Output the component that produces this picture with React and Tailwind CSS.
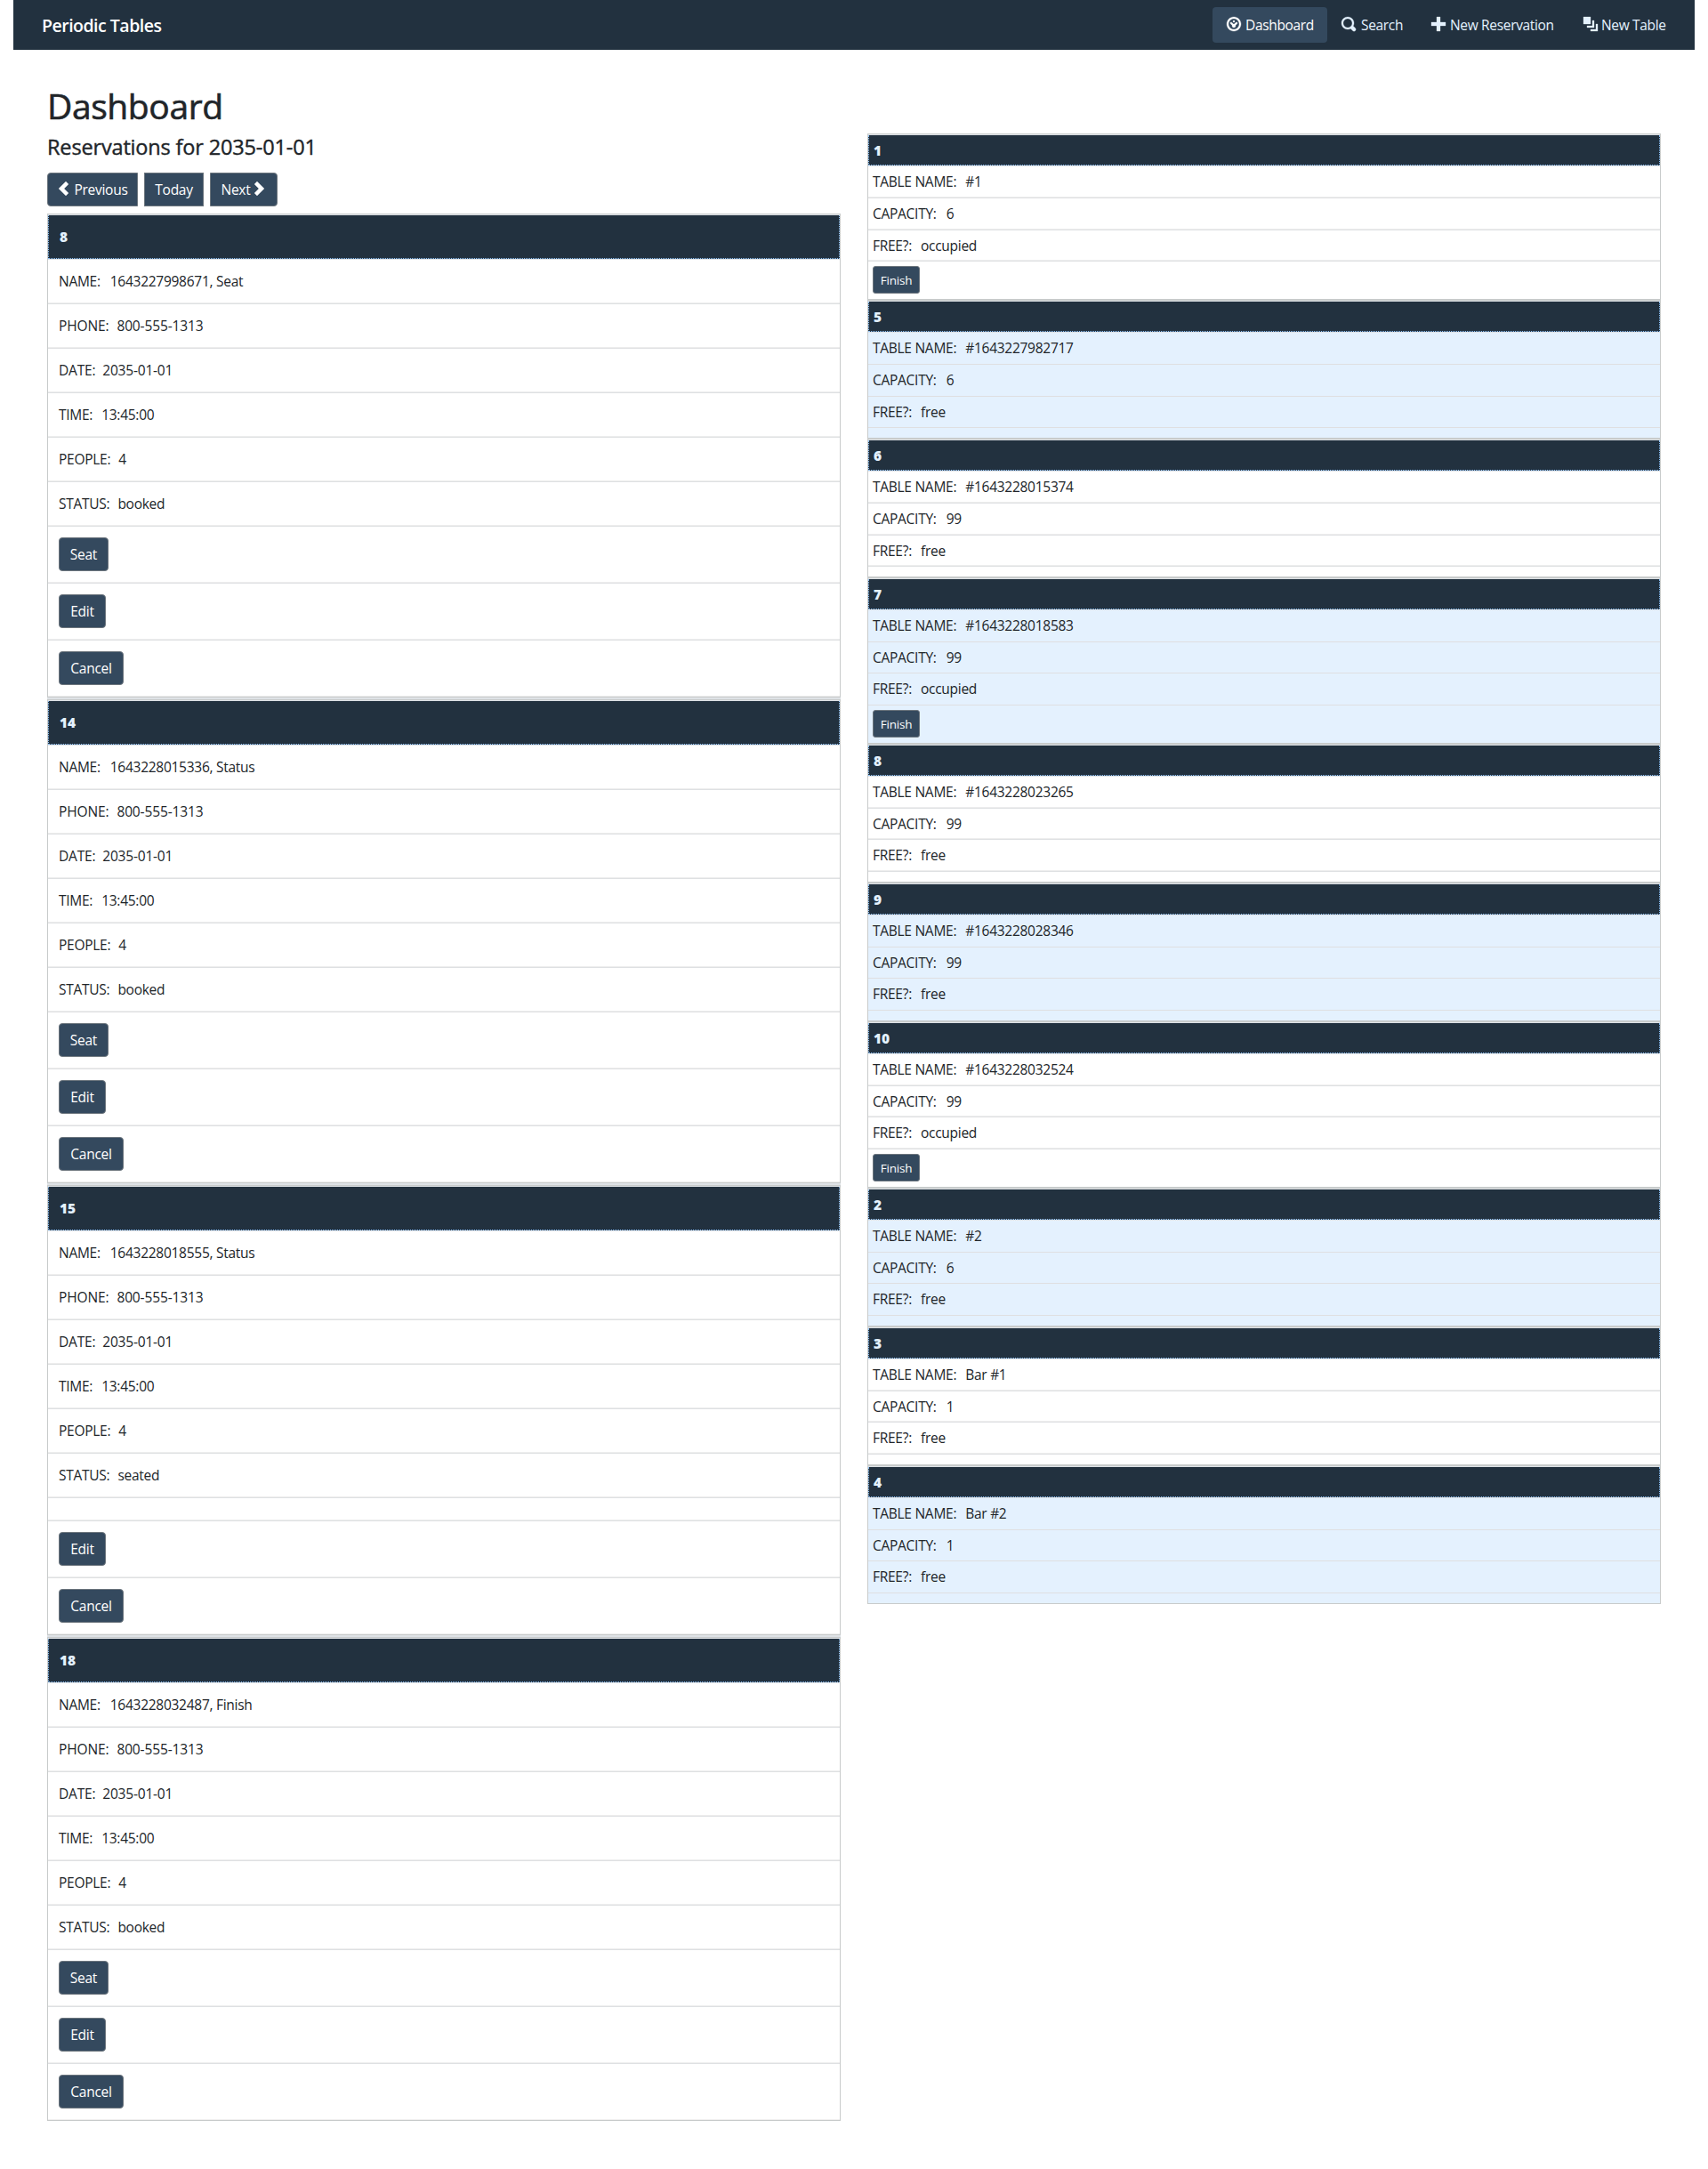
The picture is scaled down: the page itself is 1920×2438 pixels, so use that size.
const PATHS = {
  dashboard:
    'M4 0c-2.2 0-4 1.8-4 4s1.8 4 4 4 4-1.8 4-4-1.8-4-4-4zm0 1c1.66 0 3 1.34 3 3s-1.34 3-3 3-3-1.34-3-3 1.34-3 3-3zm0 1c-.28 0-.5.22-.5.5s.22.5.5.5.5-.22.5-.5-.22-.5-.5-.5zm-1.66 1a.5.5 0 0 0-.19.84l.91.91c-.02.08-.06.16-.06.25 0 .55.45 1 1 1s1-.45 1-1c0-.09-.04-.17-.06-.25l.91-.91a.5.5 0 1 0-.72-.69l-.91.91c-.08-.02-.16-.06-.22-.06s-.17.04-.25.06l-.91-.91a.5.5 0 0 0-.44-.16.5.5 0 0 0-.06 0z',
  search:
    'M3.5 0c-1.93 0-3.5 1.57-3.5 3.5s1.57 3.5 3.5 3.5c.59 0 1.17-.14 1.66-.41a1 1 0 0 0 .13.13l1 1a1.02 1.02 0 1 0 1.44-1.44l-1-1a1 1 0 0 0-.16-.13c.27-.49.44-1.06.44-1.66 0-1.93-1.55-3.5-3.5-3.5zm0 1c1.39 0 2.5 1.11 2.5 2.5 0 .66-.24 1.27-.66 1.72-.01.01-.02.02-.03.03a1 1 0 0 0-.13.13c-.44.4-1.04.63-1.69.63-1.39 0-2.5-1.11-2.5-2.5s1.11-2.5 2.5-2.5z',
  plus: 'M3 0v3h-3v2h3v3h2v-3h3v-2h-3v-3h-2z',
  layers: 'M0 0v4h4v-4h-4zm5 2v3h-3v1h4v-4h-1zm2 2v3h-3v1h4v-4h-1z',
  left: 'M5 0l-4 4 4 4 1.5-1.5-2.5-2.5 2.5-2.5-1.5-1.5z',
  right: 'M3 0l-1.5 1.5 2.5 2.5-2.5 2.5 1.5 1.5 4-4-4-4z',
};

function Icon({ name, className = '' }) {
  return (
    <svg
      viewBox="0 0 8 8"
      className={`block size-4 shrink-0 overflow-visible fill-current stroke-current stroke-[0.15] ${className}`}
    >
      <path d={PATHS[name]} />
    </svg>
  );
}

const NAV = [
  { icon: 'dashboard', label: 'Dashboard', cls: 'w-[129px] gap-[5px] rounded bg-[#34495e] text-white' },
  { icon: 'search', label: 'Search', cls: 'w-[101px] gap-1.5' },
  { icon: 'plus', label: 'New Reservation', cls: 'w-[171px] gap-[5px]' },
  { icon: 'layers', label: 'New Table', cls: 'w-[125px] gap-1' },
];

const RESERVATIONS = [
  { id: 8, name: '1643227998671, Seat', status: 'booked' },
  { id: 14, name: '1643228015336, Status', status: 'booked' },
  { id: 15, name: '1643228018555, Status', status: 'seated' },
  { id: 18, name: '1643228032487, Finish', status: 'booked' },
];

const TABLES = [
  { id: 1, name: '#1', capacity: 6, tall: true, occupied: true },
  { id: 5, name: '#1643227982717', capacity: 6, tall: true },
  { id: 6, name: '#1643228015374', capacity: 99, tall: true },
  { id: 7, name: '#1643228018583', capacity: 99, occupied: true },
  { id: 8, name: '#1643228023265', capacity: 99 },
  { id: 9, name: '#1643228028346', capacity: 99 },
  { id: 10, name: '#1643228032524', capacity: 99, occupied: true },
  { id: 2, name: '#2', capacity: 6 },
  { id: 3, name: 'Bar #1', capacity: 1 },
  { id: 4, name: 'Bar #2', capacity: 1 },
];

function Button({ children, className = '' }) {
  return (
    <button
      className={`flex h-[38px] items-center justify-center whitespace-nowrap border border-[#6c757d] bg-[#34495e] pt-0.5 text-white ${className}`}
    >
      {children}
    </button>
  );
}

function Lines({ last }) {
  return (
    <div
      className={`h-0.5 shrink-0 border-b bg-[#eeeeee] ${last ? 'border-[#c8cbcb]' : 'border-[#dee0e2]'}`}
    />
  );
}

function Header({ id, className }) {
  return (
    <>
      <div className="h-0.5 border-t border-[#c8cbcb] bg-[#dee2e6]" />
      <div
        className={`border-x border-b border-dotted border-[#8cc0f5] bg-[#22313f] font-extrabold tracking-[-0.1px] text-[#e4f1fe] ${className}`}
      >
        {id}
      </div>
      <div className="h-px bg-[#dee2e6]" />
    </>
  );
}

function Field({ label, value, gap = 'ml-[10px]' }) {
  return (
    <div className="whitespace-pre leading-6">
      {label}:<span className={gap}>{value}</span>
    </div>
  );
}

function Row({ label, value, gap, spacing = '' }) {
  return (
    <div className="flex h-[50px] flex-col">
      <div className={`flex-1 pl-3 pt-3 ${spacing}`}>
        <Field label={label} value={value} gap={gap} />
      </div>
      <Lines />
    </div>
  );
}

function Action({ label, width, last }) {
  return (
    <div className="flex h-16 flex-col">
      <div className="flex-1 pl-3 pt-3">
        <Button className={`rounded ${width}`}>{label}</Button>
      </div>
      <Lines last={last} />
    </div>
  );
}

function Reservation({ r }) {
  return (
    <section className="border-x border-[#c8cbcb]">
      <Header id={r.id} className="h-[49px] pl-3 pt-3 leading-6" />
      <Row label="NAME" value={r.name} gap="ml-[11px]" />
      <Row label="PHONE" value="800-555-1313" spacing="tracking-[-0.13px]" gap="ml-[9px]" />
      <Row label="DATE" value="2035-01-01" spacing="tracking-[-0.2px]" gap="ml-2" />
      <Row label="TIME" value="13:45:00" />
      <Row label="PEOPLE" value="4" gap="ml-[9px]" />
      <Row label="STATUS" value={r.status} gap="ml-[9px]" />
      {r.status === 'booked' ? (
        <Action label="Seat" width="w-[56px]" />
      ) : (
        <div className="flex h-[26px] flex-col justify-end">
          <Lines />
        </div>
      )}
      <Action label="Edit" width="w-[53px]" />
      <Action label="Cancel" width="w-[73px]" last />
    </section>
  );
}

function TableRow({ label, value, striped, height, gap }) {
  return (
    <div className={`flex flex-col ${height}`}>
      <div className="flex-1 pl-[5px] pt-[5px]">
        <Field label={label} value={value} gap={gap} />
      </div>
      {striped ? <div className="h-px bg-[#dfdfe1]" /> : <Lines />}
    </div>
  );
}

function Table({ t, striped }) {
  return (
    <section className={`border-x border-[#c8cbcb] ${striped ? 'bg-[#e4f1fe]' : ''}`}>
      <Header id={t.id} className="h-[34px] pl-[5px] pt-[5px] leading-6" />
      <TableRow label="TABLE NAME" value={t.name} striped={striped} height="h-9" />
      <TableRow
        label="CAPACITY"
        value={t.capacity}
        striped={striped}
        gap="ml-[11px]"
        height={t.tall ? 'h-9' : 'h-[35px]'}
      />
      <TableRow
        label="FREE?"
        value={t.occupied ? 'occupied' : 'free'}
        striped={striped}
        height={t.tall ? 'h-[35px]' : 'h-9'}
      />
      <div
        className={`border-b border-[#c8cbcb] ${t.occupied ? 'h-[43px] pl-[5px] pt-[5px]' : 'h-3'}`}
      >
        {t.occupied && (
          <button className="flex h-[31px] w-[53px] items-center justify-center rounded-[3px] border border-[#6c757d] bg-[#34495e] pt-px text-[13.5px] tracking-[-0.2px] text-white">
            Finish
          </button>
        )}
      </div>
    </section>
  );
}

export default function App() {
  return (
    <div className="min-h-[2438px] bg-white px-[15px] font-['Open_Sans','Noto_Sans',sans-serif] text-[15.5px] tracking-[-0.27px] text-[#212529]">
      <nav className="flex h-14 items-center justify-between bg-[#22313f] pl-8 pr-4">
        <span className="pt-0.5 text-[19.5px] font-semibold tracking-[-0.5px] text-white">
          Periodic Tables
        </span>
        <div className="flex text-[#e4f1fe]">
          {NAV.map((n) => (
            <a key={n.label} className={`flex h-10 items-center whitespace-nowrap pl-4 ${n.cls}`}>
              <Icon name={n.icon} className="-mt-0.5" />
              <span className="pt-0.5 tracking-[-0.33px]">{n.label}</span>
            </a>
          ))}
        </div>
      </nav>
      <main className="flex gap-[30px] px-[38px]">
        <div className="w-[892px]">
          <h1 className="mt-[39px] h-[57px] text-[39px] font-medium leading-12 tracking-[-0.4px] [-webkit-text-stroke:0.6px_currentColor]">
            Dashboard
          </h1>
          <h4 className="-mt-px h-[43px] text-[23.5px] font-medium leading-[29px] tracking-[-0.16px] [-webkit-text-stroke:0.4px_currentColor]">
            Reservations for 2035-01-01
          </h4>
          <div className="mb-2 flex gap-[7px]">
            <Button className="w-[102px] gap-[3px] rounded-l">
              <Icon name="left" className="-mt-1" />
              Previous
            </Button>
            <Button className="w-[67px]">Today</Button>
            <Button className="w-[76px] gap-0.5 rounded-r">
              Next
              <Icon name="right" className="-mt-1" />
            </Button>
          </div>
          <div className="flex flex-col gap-0.5 bg-[#dee2e6]">
            {RESERVATIONS.map((r) => (
              <div key={r.id} className="bg-white">
                <Reservation r={r} />
              </div>
            ))}
          </div>
        </div>
        <div className="mt-[94px] w-[892px]">
          {TABLES.map((t, i) => (
            <Table key={t.id} t={t} striped={i % 2 === 1} />
          ))}
        </div>
      </main>
    </div>
  );
}
